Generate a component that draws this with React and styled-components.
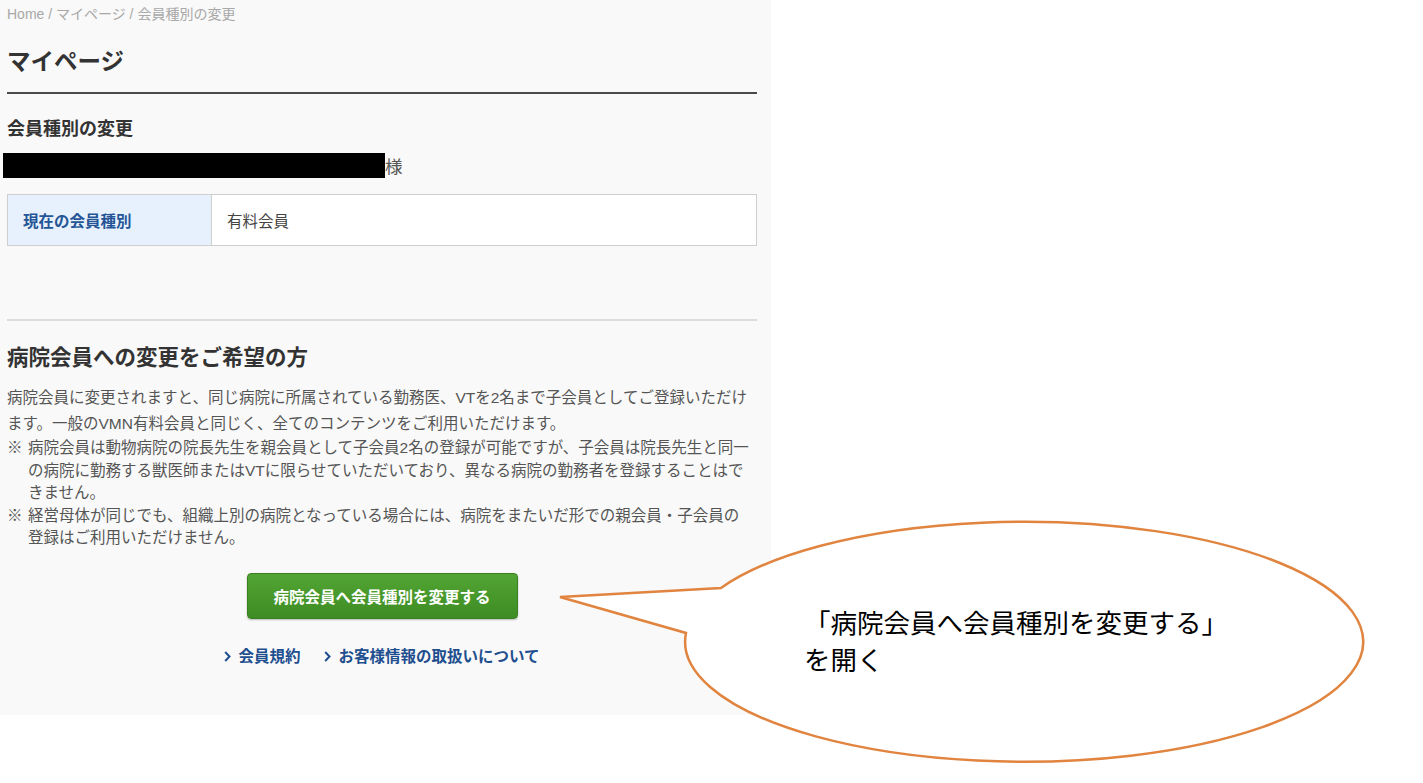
import styled, { createGlobalStyle } from "styled-components";

const GlobalStyle = createGlobalStyle`
  body {
    margin: 0;
    background: #ffffff;
    font-family: "Liberation Sans", "Noto Sans CJK JP", sans-serif;
    color: #444;
  }
`;

const Page = styled.div`
  position: relative;
  width: 1423px;
  height: 783px;
  overflow: hidden;
`;

const Panel = styled.section`
  width: 771px;
  height: 715px;
  box-sizing: border-box;
  padding: 0 14px 0 7px;
  background: #f9f9f9;
`;

const Breadcrumb = styled.div`
  padding-top: 4px;
  font-size: 14px;
  line-height: 20px;
  color: #a8a8a8;
`;

const Title = styled.h1`
  margin: 22px 0 0;
  padding-bottom: 14px;
  border-bottom: 2px solid #4a4a4a;
  font-size: 23.5px;
  line-height: 32px;
  font-weight: 700;
  color: #333;
`;

const SubTitle = styled.h2`
  margin: 23px 0 0;
  font-size: 18px;
  line-height: 24px;
  font-weight: 700;
  color: #333;
`;

const NameRow = styled.div`
  margin-top: 12px;
  display: flex;
  align-items: center;
  height: 25px;
  font-size: 17.5px;
  color: #555;
`;

const Redacted = styled.span`
  display: block;
  width: 382px;
  height: 25px;
  margin-left: -4px;
  background: #000;
`;

const InfoTable = styled.div`
  margin-top: 16px;
  display: grid;
  grid-template-columns: 204px 1fr;
  height: 52px;
  box-sizing: border-box;
  border: 1px solid #cfcfcf;
  background: #fff;
`;

const Cell = styled.div`
  display: flex;
  align-items: center;
  padding-left: 15px;
  font-size: 15.5px;
  font-weight: ${(p) => (p.$head ? 700 : 400)};
  color: ${(p) => (p.$head ? "#255596" : "#444")};
  background: ${(p) => (p.$head ? "#e7f1fd" : "#fff")};
  border-right: ${(p) => (p.$head ? "1px solid #cfcfcf" : "none")};
`;

const Divider = styled.hr`
  margin: 73px 0 0;
  border: 0;
  height: 2px;
  background: #dcdcdc;
`;

const SectionTitle = styled.h3`
  margin: 22px 0 0;
  font-size: 21.5px;
  line-height: 30px;
  font-weight: 700;
  color: #333;
`;

const Lead = styled.p`
  margin: 12px 0 0;
  font-size: 15.5px;
  line-height: 26px;
  color: #555;
`;

const Notes = styled.ul`
  margin: 0;
  padding: 0;
  list-style: none;
`;

const Note = styled.li`
  display: flex;
  font-size: 15.5px;
  line-height: 22.5px;
  color: #555;
`;

const NoteMark = styled.span`
  flex: 0 0 21px;
`;

const Actions = styled.div`
  margin-top: 23px;
  display: flex;
  flex-direction: column;
  align-items: center;
`;

const ChangeButton = styled.button`
  width: 271px;
  height: 46px;
  border: 1px solid #3a7f22;
  border-radius: 4px;
  background: linear-gradient(#52a533, #3d8c24);
  box-shadow: 0 1px 2px rgba(0, 0, 0, 0.25);
  color: #fff;
  font-family: inherit;
  font-size: 15.5px;
  font-weight: 700;
  cursor: pointer;
`;

const LinkRow = styled.div`
  margin-top: 27px;
  display: flex;
  gap: 24px;
`;

const TextLink = styled.a`
  display: flex;
  align-items: center;
  gap: 7px;
  font-size: 15.5px;
  line-height: 22px;
  font-weight: 700;
  color: #1f4f8f;
  text-decoration: none;
`;

const Callout = styled.div`
  position: absolute;
  left: 0;
  top: 0;
  width: 1423px;
  height: 783px;
  pointer-events: none;
`;

const CalloutText = styled.div`
  position: absolute;
  left: 804px;
  top: 603px;
  font-family: "Noto Sans CJK JP", sans-serif;
  font-size: 26.5px;
  line-height: 37px;
  color: #000;
`;

const Chevron = () => (
  <svg width="7" height="11" viewBox="0 0 7 11">
    <polyline points="1.2,1 5.5,5.5 1.2,10" fill="none" stroke="#1f4f8f" strokeWidth="2" />
  </svg>
);

const App = () => {
  return (
    <Page>
      <GlobalStyle />
      <Panel>
        <Breadcrumb>Home / マイページ / 会員種別の変更</Breadcrumb>
        <Title>マイページ</Title>
        <SubTitle>会員種別の変更</SubTitle>
        <NameRow>
          <Redacted />
          様
        </NameRow>
        <InfoTable>
          <Cell $head>現在の会員種別</Cell>
          <Cell>有料会員</Cell>
        </InfoTable>
        <Divider />
        <SectionTitle>病院会員への変更をご希望の方</SectionTitle>
        <Lead>
          病院会員に変更されますと、同じ病院に所属されている勤務医、VTを2名まで子会員としてご登録いただけます。一般のVMN有料会員と同じく、全てのコンテンツをご利用いただけます。
        </Lead>
        <Notes>
          <Note>
            <NoteMark>※</NoteMark>
            <span>
              病院会員は動物病院の院長先生を親会員として子会員2名の登録が可能ですが、子会員は院長先生と同一
              <br />
              の病院に勤務する獣医師またはVTに限らせていただいており、異なる病院の勤務者を登録することはで
              <br />
              きません。
            </span>
          </Note>
          <Note>
            <NoteMark>※</NoteMark>
            <span>
              経営母体が同じでも、組織上別の病院となっている場合には、病院をまたいだ形での親会員・子会員の
              <br />
              登録はご利用いただけません。
            </span>
          </Note>
        </Notes>
        <Actions>
          <ChangeButton type="button">病院会員へ会員種別を変更する</ChangeButton>
          <LinkRow>
            <TextLink href="#">
              <Chevron />
              会員規約
            </TextLink>
            <TextLink href="#">
              <Chevron />
              お客様情報の取扱いについて
            </TextLink>
          </LinkRow>
        </Actions>
      </Panel>

      <Callout>
        <svg width="1423" height="783" viewBox="0 0 1423 783">
          <path
            d="M 721 588 A 339 120 0 1 1 686 633 L 560 597 Z"
            fill="#fff"
            stroke="#e0843f"
            strokeWidth="2.5"
          />
        </svg>
        <CalloutText>
          「病院会員へ会員種別を変更する」
          <br />
          を開く
        </CalloutText>
      </Callout>
    </Page>
  );
};

export default App;
